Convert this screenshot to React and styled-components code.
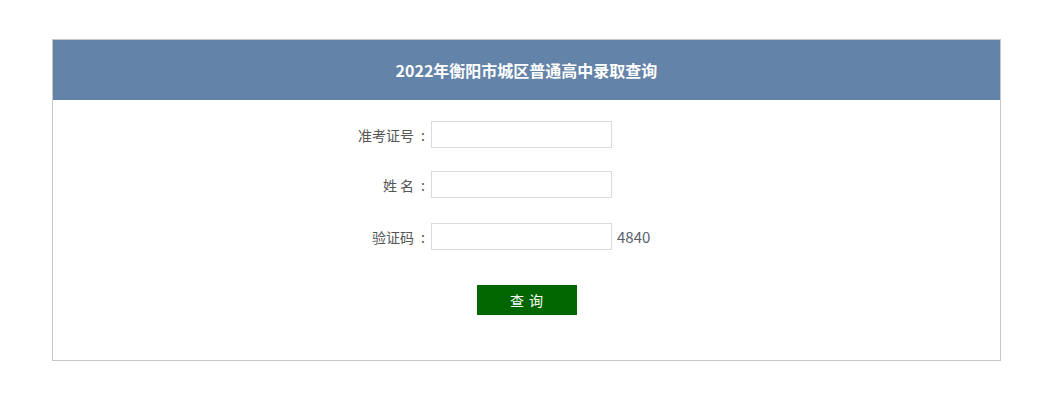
import React from "react";
import styled, { createGlobalStyle } from "styled-components";

const GlobalStyle = createGlobalStyle`
  body {
    margin: 0;
    background: #fff;
    font-family: "Microsoft YaHei", "Noto Sans CJK SC", sans-serif;
  }
`;

const Page = styled.div`
  padding: 39px 37px 0 52px;
`;

const Panel = styled.div`
  width: 947px;
  border: 1px solid #c8c8c8;
`;

const Header = styled.div`
  height: 60px;
  background: #6383a9;
  color: #fff;
  font-size: 16px;
  font-weight: bold;
  display: flex;
  align-items: center;
  justify-content: center;
`;

const Form = styled.form`
  padding: 21px 0 45px;
  display: flex;
  flex-direction: column;
`;

const Row = styled.div`
  display: grid;
  grid-template-columns: 378px 181px 1fr;
  align-items: center;
  margin-bottom: ${(p) => p.$gap}px;
`;

const Label = styled.label`
  text-align: right;
  font-size: 14px;
  line-height: 20px;
  color: #555;
  padding-right: 6px;
  white-space: pre;
`;

const Colon = styled.span`
  margin-left: 7px;
`;

const Input = styled.input`
  box-sizing: border-box;
  width: 181px;
  height: 27px;
  border: 1px solid #d9d9de;
  outline: none;
  padding: 0 4px;
  margin: 0;
`;

const Code = styled.span`
  font-size: 15px;
  line-height: 20px;
  color: #5a5e6e;
  padding-left: 5px;
`;

const Actions = styled.div`
  display: flex;
  justify-content: center;
`;

const Button = styled.button`
  width: 100px;
  height: 30px;
  border: none;
  background: #006600;
  color: #fff;
  font-family: inherit;
  font-size: 14px;
  letter-spacing: 1px;
  padding: 0 0 0 1px;
  cursor: pointer;
`;

const fields = [
  { label: "准考证号", gap: 23 },
  { label: "姓 名", gap: 25 },
  { label: "验证码", gap: 35, code: "4840" },
];

const App = () => {
  return (
    <>
      <GlobalStyle />
      <Page>
        <Panel>
          <Header>2022年衡阳市城区普通高中录取查询</Header>
          <Form onSubmit={(e) => e.preventDefault()}>
            {fields.map((f) => (
              <Row key={f.label} $gap={f.gap}>
                <Label>
                  {f.label}
                  <Colon>:</Colon>
                </Label>
                <Input type="text" />
                {f.code ? <Code>{f.code}</Code> : <span />}
              </Row>
            ))}
            <Actions>
              <Button type="submit">查 询</Button>
            </Actions>
          </Form>
        </Panel>
      </Page>
    </>
  );
};

export default App;
